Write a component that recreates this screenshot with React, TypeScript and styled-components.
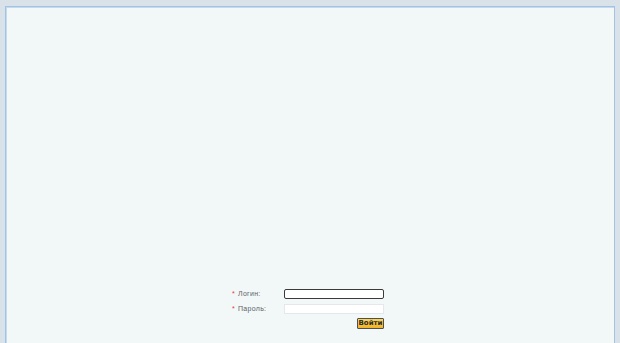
import React from "react";
import styled, { createGlobalStyle } from "styled-components";

const GlobalStyle = createGlobalStyle`
  html, body {
    margin: 0;
    padding: 0;
    background: #d9e1e9;
    height: 100%;
    overflow: hidden;
  }
  #root {
    padding: 6px 5px 0 5px;
  }
`;

const Panel = styled.div`
  background: #f2f8f8;
  border: 1px solid #a4c2e2;
  box-shadow: inset 1px 1px 0 #c6daee;
  height: 400px;
  box-sizing: border-box;
  padding-top: 279px;
  display: flex;
  justify-content: center;
`;

const LoginForm = styled.form`
  display: grid;
  grid-template-columns: 54px 100px;
  grid-auto-rows: 15px;
  align-items: center;
  font-family: "Liberation Sans", Arial, sans-serif;
  font-size: 7px;
  color: #5c6166;
  margin-left: -6px;
`;

const Label = styled.label`
  padding-left: 2px;
  letter-spacing: 0.3px;
`;

const Star = styled.span`
  color: #e03a3a;
  margin-right: 3px;
`;

const Field = styled.input<{ $focused?: boolean }>`
  box-sizing: border-box;
  width: 100px;
  height: 10px;
  margin: 0;
  padding: 0;
  background: #ffffff;
  border: ${(p) => (p.$focused ? "1.5px solid #3a3a3a" : "1px solid #e4e8ea")};
  border-radius: ${(p) => (p.$focused ? "2px" : "0")};
  outline: none;
`;

const ButtonCell = styled.div`
  grid-column: 2;
  display: flex;
  justify-content: flex-end;
`;

const Submit = styled.button`
  box-sizing: border-box;
  height: 11px;
  width: 27px;
  padding: 0;
  font-family: "DejaVu Sans", Verdana, sans-serif;
  font-size: 7px;
  font-weight: bold;
  color: #2a2a2a;
  background: linear-gradient(#fbd45a, #f0b323);
  border: 1px solid #4f4f4f;
  border-radius: 1px;
  line-height: 9px;
`;

export default function App() {
  return (
    <>
      <GlobalStyle />
      <Panel>
        <LoginForm onSubmit={(e) => e.preventDefault()}>
          <Label>
            <Star>*</Star>Логин:
          </Label>
          <Field $focused type="text" />
          <Label>
            <Star>*</Star>Пароль:
          </Label>
          <Field type="password" />
          <ButtonCell>
            <Submit type="submit">Войти</Submit>
          </ButtonCell>
        </LoginForm>
      </Panel>
    </>
  );
}
